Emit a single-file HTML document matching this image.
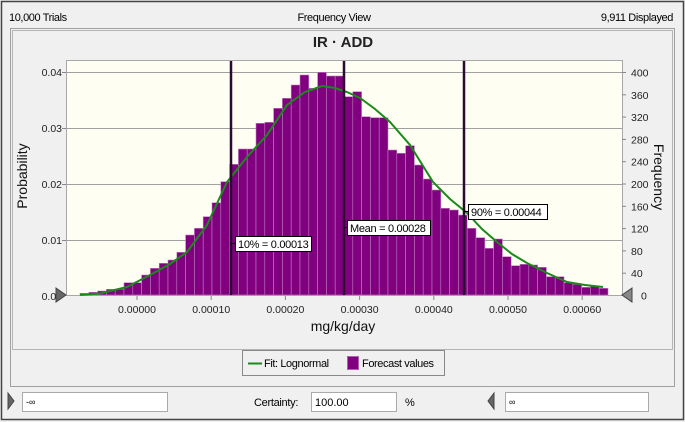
<!DOCTYPE html>
<html><head><meta charset="utf-8"><style>
html,body{margin:0;padding:0;background:#f0f0f0;width:685px;height:422px;overflow:hidden}
svg{display:block;font-family:"Liberation Sans",sans-serif}
</style></head><body>
<svg width="685" height="422" viewBox="0 0 685 422" xmlns="http://www.w3.org/2000/svg">
<rect x="0" y="0" width="685" height="422" fill="#f0f0f0"/>
<rect x="1.5" y="1.5" width="682" height="418" fill="none" stroke="#444" stroke-width="1.5"/>
<text x="9" y="21" font-size="11" letter-spacing="-0.4" fill="#000">10,000 Trials</text>
<text x="334" y="21" font-size="11" letter-spacing="-0.4" text-anchor="middle" fill="#000">Frequency View</text>
<text x="673" y="21" font-size="11" letter-spacing="-0.4" text-anchor="end" fill="#000">9,911 Displayed</text>
<rect x="10.5" y="28.5" width="664" height="358" fill="none" stroke="#a0a0a0"/>
<rect x="12.5" y="30.5" width="660" height="319" fill="none" stroke="#777" stroke-dasharray="1,1"/>
<text x="343" y="47" font-size="15" font-weight="bold" text-anchor="middle" fill="#222">IR · ADD</text>
<rect x="66.5" y="60.5" width="556" height="235" fill="#fefef2" stroke="#a8a8a8"/>
<g stroke="#a0a0a0" stroke-width="1">
<line x1="66" y1="72.5" x2="622" y2="72.5"/><line x1="66" y1="128.5" x2="622" y2="128.5"/>
<line x1="66" y1="184.5" x2="622" y2="184.5"/><line x1="66" y1="240.5" x2="622" y2="240.5"/>
</g>
<g id="bars" fill="#800080" stroke="#c080c0" stroke-width="0.6"></g>
<polyline fill="none" stroke="#1a8a1a" stroke-width="2" points="80,295 100,293.5 127,287 150,275 170,264 187,252 207,225 227,182 247,157 267,135 287,105 305,92 322,86 335,88 347,92 360,98 375,109 390,122 410,145 433,182 450,199 467,213 482,229 497,242 512,254 527,263 547,273 567,282 585,285 603,287"/>
<g stroke="#2a0a30" stroke-width="2.5">
<line x1="231" y1="61" x2="231" y2="295"/><line x1="344" y1="61" x2="344" y2="295"/><line x1="464" y1="61" x2="464" y2="295"/>
</g>
<g font-size="11" letter-spacing="-0.3" fill="#000">
<line x1="231" y1="243.5" x2="236" y2="243.5" stroke="#000"/>
<rect x="235.5" y="236.5" width="76" height="15" fill="#fff" stroke="#000"/>
<text x="238" y="248">10% = 0.00013</text>
<line x1="344" y1="227.5" x2="348" y2="227.5" stroke="#000"/>
<rect x="347.5" y="220.5" width="83" height="15" fill="#fff" stroke="#000"/>
<text x="350" y="232">Mean = 0.00028</text>
<line x1="464" y1="211.5" x2="469" y2="211.5" stroke="#000"/>
<rect x="468.5" y="204.5" width="79" height="15" fill="#fff" stroke="#000"/>
<text x="471" y="216">90% = 0.00044</text>
</g>
<g font-size="10.5" fill="#222" text-anchor="end">
<text x="62" y="76">0.04</text><text x="62" y="132">0.03</text><text x="62" y="188">0.02</text><text x="62" y="244">0.01</text><text x="62" y="300">0.00</text>
</g>
<g stroke="#888"><line x1="62" y1="72.5" x2="66" y2="72.5"/><line x1="62" y1="128.5" x2="66" y2="128.5"/><line x1="62" y1="184.5" x2="66" y2="184.5"/><line x1="62" y1="240.5" x2="66" y2="240.5"/></g>
<g id="rt" font-size="10.5" fill="#222"></g>
<g id="xt" font-size="10.5" fill="#222" text-anchor="middle"></g>
<text x="343" y="331" font-size="14" text-anchor="middle" fill="#111">mg/kg/day</text>
<text transform="translate(27,176) rotate(-90)" font-size="14" text-anchor="middle" fill="#111">Probability</text>
<text transform="translate(654,177) rotate(90)" font-size="14" text-anchor="middle" fill="#111">Frequency</text>
<polygon points="56,288 66,295 56,302" fill="#666" stroke="#444"/>
<polygon points="632,288 622,295 632,302" fill="#888" stroke="#444"/>
<rect x="242.5" y="350.5" width="202" height="25" fill="#f0f0f0" stroke="#888"/>
<line x1="248" y1="363.5" x2="262" y2="363.5" stroke="#1a8a1a" stroke-width="2"/>
<text x="264" y="367" font-size="11" letter-spacing="-0.4" fill="#000">Fit: Lognormal</text>
<rect x="347.5" y="356.5" width="11" height="13" fill="#800080" stroke="#b060b0"/>
<text x="362" y="367" font-size="11" letter-spacing="-0.4" fill="#000">Forecast values</text>
<polygon points="8,393 14,401 8,409" fill="#666" stroke="#444"/>
<rect x="22.5" y="392.5" width="145" height="19" fill="#fff" stroke="#aaa"/>
<text x="26" y="405" font-size="9" fill="#000">-∞</text>
<text x="254" y="406" font-size="11" letter-spacing="-0.3" fill="#000">Certainty:</text>
<rect x="311.5" y="392.5" width="85" height="19" fill="#fff" stroke="#aaa"/>
<text x="315" y="406" font-size="11" fill="#000">100.00</text>
<text x="405" y="406" font-size="11" fill="#000">%</text>
<polygon points="494,393 488,401 494,409" fill="#666" stroke="#444"/>
<rect x="505.5" y="392.5" width="143" height="19" fill="#fff" stroke="#aaa"/>
<text x="509" y="405" font-size="9" fill="#000">∞</text>
</svg>
<script>
var h=[1.7,2.7,4,5.7,5.7,12.3,12.3,20,26.7,31.7,35,42.7,60,66.7,78.3,92.3,113.3,130.7,146,146,171.7,172.7,186.7,196.7,210,220,206.7,222.7,219,219,198.3,203.3,178.3,177.3,177.3,145,141.7,149.3,130,116,105,86.7,85,80,66.7,57.3,46.7,56,38.3,29.3,30.7,30,27.7,18.3,18.3,12.3,10.7,7.7,9,6.7];
var ns="http://www.w3.org/2000/svg",g=document.getElementById('bars'),w=528/h.length;
h.forEach(function(v,i){var r=document.createElementNS(ns,'rect');r.setAttribute('x',80+i*w);r.setAttribute('y',295-v);r.setAttribute('width',w);r.setAttribute('height',v);g.appendChild(r);});
var rt=document.getElementById('rt');
for(var k=0;k<=10;k++){var y=295.5-k*22.3;var l=document.createElementNS(ns,'line');l.setAttribute('x1',622);l.setAttribute('x2',626);l.setAttribute('y1',y);l.setAttribute('y2',y);l.setAttribute('stroke','#888');rt.appendChild(l);
if(k>0){var t=document.createElementNS(ns,'text');t.setAttribute('x',631);t.setAttribute('y',y+4);t.textContent=k*40;rt.appendChild(t);}}
var z=document.createElementNS(ns,'text');z.setAttribute('x',641);z.setAttribute('y',299.5);z.textContent='0';rt.appendChild(z);
var xt=document.getElementById('xt');
for(var k=0;k<=6;k++){var x=137+k*74.2;var l=document.createElementNS(ns,'line');l.setAttribute('x1',x);l.setAttribute('x2',x);l.setAttribute('y1',296);l.setAttribute('y2',300);l.setAttribute('stroke','#888');xt.appendChild(l);
var t=document.createElementNS(ns,'text');t.setAttribute('x',x);t.setAttribute('y',313);t.textContent='0.000'+(k==0?'00':(k+'0'));xt.appendChild(t);}
</script>
</body></html>
